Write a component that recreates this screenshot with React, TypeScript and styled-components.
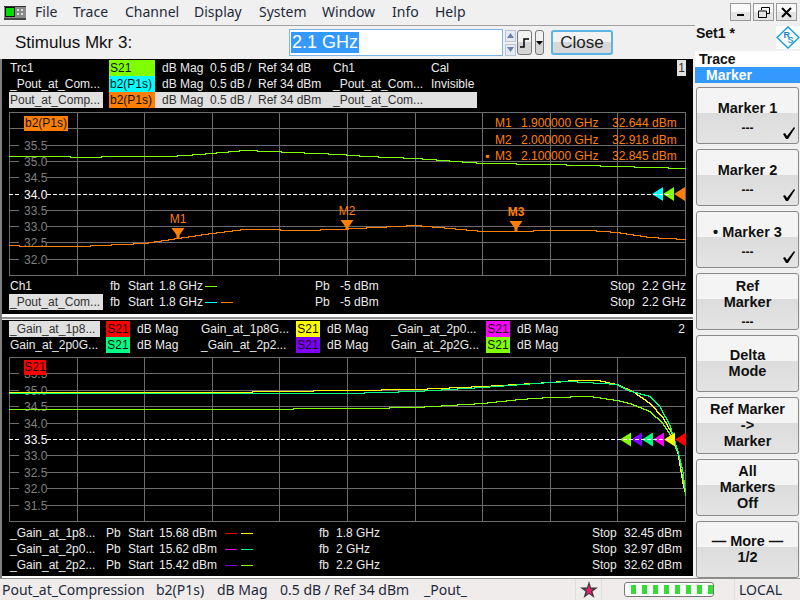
import React from 'react';
import styled, { createGlobalStyle } from 'styled-components';

const GlobalStyle = createGlobalStyle`
  html, body {
    margin: 0;
    padding: 0;
    background: #f0f0f0;
  }
`;

type Pt = [number, number];

const ORANGE = '#ff8000';
const LIME = '#80ff00';
const SPRING = '#00ff80';
const YELLOW = '#ffff00';

const stepPath = (pts: Pt[]) => {
  let d = '';
  let seg = 0;
  for (let x = pts[0][0]; x <= pts[pts.length - 1][0]; x++) {
    while (seg < pts.length - 2 && x > pts[seg + 1][0]) seg++;
    const [x0, y0] = pts[seg];
    const [x1, y1] = pts[seg + 1];
    const y = Math.round(y0 + ((y1 - y0) * (x - x0)) / (x1 - x0)) + 0.5;
    d += d ? `L${x} ${y}` : `M${x} ${y}`;
  }
  return d;
};

const upperGreen: Pt[] = [[9, 156], [70, 156], [72, 157], [100, 157], [102, 156], [170, 156], [200, 154], [245, 150], [270, 151], [340, 154], [366, 156], [416, 158], [483, 163], [550, 164], [617, 166], [686, 168]];
const upperOrange: Pt[] = [[9, 245], [30, 246], [80, 246], [100, 245], [145, 243], [178, 238], [212, 233], [245, 229], [262, 229], [300, 230], [340, 229], [356, 228], [416, 225], [450, 228], [483, 231], [516, 231], [550, 230], [590, 230], [617, 232], [650, 237], [686, 239]];
const lowerYellow: Pt[] = [[9, 392], [226, 392], [279, 391], [347, 390], [416, 389], [483, 386], [550, 382], [575, 380], [598, 380], [617, 384], [633, 391], [650, 403], [663, 417], [672, 433], [678, 453], [683, 483], [686, 495]];
const lowerSpring: Pt[] = [[9, 393], [347, 393], [416, 391], [483, 387], [550, 382], [570, 381], [617, 384], [628, 390], [650, 396], [660, 406], [670, 425], [678, 451], [683, 471], [686, 495]];
const lowerLime: Pt[] = [[9, 409], [287, 409], [300, 408], [363, 408], [416, 407], [483, 403], [520, 399], [550, 397], [590, 396], [617, 400], [630, 403], [650, 411], [663, 423], [672, 437], [678, 453], [686, 495]];

const vLines = [9, 77, 144, 212, 279, 347, 415, 482, 550, 617, 685];

const Root = styled.div`
  width: 800px;
  height: 600px;
  overflow: hidden;
  display: flex;
  flex-direction: column;
  background: #f0f0f0;
  font-family: 'Liberation Sans', Arial, sans-serif;
`;

const Body = styled.div`
  display: flex;
  height: 578px;
`;

const Main = styled.div`
  width: 695px;
  display: flex;
  flex-direction: column;
`;

const MenuBar = styled.div`
  height: 25px;
  box-sizing: content-box;
  display: flex;
  align-items: center;
  padding-left: 4px;
  border-bottom: 1px solid #a0a0a0;
  font-family: 'Noto Sans', sans-serif;
  font-size: 14px;
  line-height: 21px;
  color: #1e2a3a;
  svg {
    margin-right: 9px;
    margin-top: 0;
  }
`;

const MenuItem = styled.span<{ $w: number }>`
  width: ${(p) => p.$w}px;
  margin-top: -3px;
`;

const StimulusBar = styled.div`
  height: 33px;
  display: flex;
  align-items: center;
  padding-left: 15px;
`;

const StimulusLabel = styled.span`
  width: 274px;
  font-size: 17px;
  color: #111;
`;

const FreqInput = styled.div`
  width: 211px;
  height: 25px;
  border: 1px solid #7eb4ea;
  background: #fff;
  display: flex;
  align-items: center;
  padding-left: 1px;
`;

const Selected = styled.span`
  background: #3399ff;
  color: #fff;
  font-size: 18px;
  line-height: 21px;
  padding: 0 1px;
`;

const Spin = styled.div`
  margin-left: 2px;
  width: 11px;
  height: 26px;
  display: flex;
  flex-direction: column;
  justify-content: space-between;
`;

const SpinPart = styled.div`
  height: 12px;
  border: 1px solid #b8c4d4;
  box-sizing: border-box;
  background: #e6eaf2;
  display: flex;
  align-items: center;
  justify-content: center;
`;

const ToolBtn = styled.div<{ $w: number; $ml: number }>`
  width: ${(p) => p.$w}px;
  margin-left: ${(p) => p.$ml}px;
  height: 25px;
  box-sizing: border-box;
  border: 1px solid #777;
  border-radius: 3px;
  background: linear-gradient(#f2f2f2 50%, #d4d4d4 50%);
  display: flex;
  justify-content: center;
  align-items: center;
`;

const CloseBtn = styled.div`
  margin-left: 7px;
  width: 62px;
  height: 25px;
  box-sizing: border-box;
  border: 2px solid #5cb4e0;
  border-radius: 3px;
  background: linear-gradient(#f2f2f2 50%, #d8d8d8 50%);
  font-size: 17px;
  color: #222;
  display: flex;
  align-items: center;
  justify-content: center;
`;

const Diagrams = styled.div`
  flex: 1;
  margin-right: 2px;
  display: flex;
  flex-direction: column;
  background: #fff;
  border-left: 2px solid #808080;
`;

const Diagram = styled.div<{ $h: number }>`
  position: relative;
  height: ${(p) => p.$h}px;
  background: #000;
  color: #ececec;
  font-size: 12px;
`;

const Gap = styled.div`
  height: 6px;
  background: linear-gradient(#fff 3px, #909090 3px, #909090 5px, #f0f0f0 5px);
`;

const Rows = styled.div<{ $top: number; $bottom: number }>`
  padding: ${(p) => p.$top}px 0 ${(p) => p.$bottom}px 7px;
`;

const Row = styled.div`
  display: flex;
  height: 16px;
  line-height: 16px;
  white-space: nowrap;
`;

const Cell = styled.span<{ $w: number; $ml?: number; $on?: boolean }>`
  width: ${(p) => p.$w}px;
  margin-left: ${(p) => p.$ml ?? 0}px;
  padding-left: 1px;
  box-sizing: border-box;
  overflow: hidden;
  flex: none;
  background: ${(p) => (p.$on ? '#e0e0e0' : 'transparent')};
  color: ${(p) => (p.$on ? '#303030' : 'inherit')};
`;

const Chip = styled.span<{ $bg: string; $w: number; $ml: number; $left?: boolean }>`
  width: ${(p) => p.$w}px;
  margin-left: ${(p) => p.$ml}px;
  flex: none;
  box-sizing: border-box;
  padding-left: ${(p) => (p.$left ? 1 : 0)}px;
  text-align: ${(p) => (p.$left ? 'left' : 'center')};
  background: ${(p) => p.$bg};
  color: #111;
`;

const GrayRun = styled.div<{ $on?: boolean }>`
  display: flex;
  padding-left: 6px;
  width: 322px;
  box-sizing: border-box;
  background: ${(p) => (p.$on ? '#e0e0e0' : 'transparent')};
  color: ${(p) => (p.$on ? '#303030' : 'inherit')};
`;

const Swatches = styled.span<{ $w: number }>`
  width: ${(p) => p.$w}px;
  flex: none;
  display: flex;
  align-items: center;
  gap: 4px;
`;

const Swatch = styled.i<{ $c: string }>`
  display: block;
  width: 12px;
  height: 1px;
  background: ${(p) => p.$c};
`;

const RightGroup = styled.div<{ $mr: number }>`
  margin-left: auto;
  margin-right: ${(p) => p.$mr}px;
  display: flex;
`;

const ChartWrap = styled.div<{ $h: number }>`
  position: relative;
  height: ${(p) => p.$h}px;
  svg {
    display: block;
  }
`;

const ChartBadge = styled.span<{ $left: number; $top: number; $w: number; $bg: string }>`
  position: absolute;
  left: ${(p) => p.$left}px;
  top: ${(p) => p.$top}px;
  width: ${(p) => p.$w}px;
  height: 15px;
  line-height: 15px;
  text-align: center;
  background: ${(p) => p.$bg};
  color: #111;
`;

const DiagramNo = styled.span<{ $box?: boolean }>`
  position: absolute;
  right: 7px;
  top: 1px;
  width: 9px;
  height: 16px;
  line-height: 16px;
  text-align: center;
  background: ${(p) => (p.$box ? '#e0e0e0' : 'transparent')};
  color: ${(p) => (p.$box ? '#303030' : 'inherit')};
`;

const MarkerList = styled.div`
  position: absolute;
  left: 483px;
  top: 3px;
  color: ${ORANGE};
`;

const MarkerRow = styled.div`
  display: flex;
  height: 16.5px;
  line-height: 16.5px;
  white-space: nowrap;
`;

const MarkerCol = styled.span<{ $w: number }>`
  width: ${(p) => p.$w}px;
`;

const Side = styled.div`
  width: 105px;
  display: flex;
  flex-direction: column;
`;

const WinButtons = styled.div`
  height: 26px;
  display: flex;
  padding: 3px 0 0 35px;
  box-sizing: border-box;
  gap: 2px;
`;

const WinBtn = styled.div`
  width: 21px;
  height: 18px;
  box-sizing: border-box;
  border: 1px solid #999;
  background: linear-gradient(#fafafa 50%, #e4e4e4 50%);
  display: flex;
  align-items: center;
  justify-content: center;
`;

const SetRow = styled.div`
  height: 25px;
  display: flex;
  justify-content: space-between;
  align-items: flex-start;
  padding-left: 1px;
  font-size: 14px;
  font-weight: bold;
  line-height: 14px;
  color: #111;
`;

const Tab = styled.div<{ $active?: boolean }>`
  height: 16px;
  line-height: 16px;
  font-size: 14px;
  font-weight: bold;
  padding-left: ${(p) => (p.$active ? 11 : 4)}px;
  background: ${(p) => (p.$active ? '#3399ff' : '#fff')};
  color: ${(p) => (p.$active ? '#fff' : '#111')};
`;

const Keys = styled.div`
  padding: 4px 1px 0 1px;
  display: flex;
  flex-direction: column;
  gap: 5px;
`;

const SoftKey = styled.div`
  position: relative;
  height: 57px;
  box-sizing: border-box;
  padding-bottom: 2px;
  border: 1px solid #8a8a8a;
  border-radius: 3px;
  background: linear-gradient(#f4f4f4 46%, #dcdcdc 46%, #e4e4e4);
  display: flex;
  flex-direction: column;
  align-items: center;
  justify-content: center;
  font-size: 14.5px;
  font-weight: bold;
  line-height: 16px;
  color: #111;
  text-align: center;
`;

const KeyDash = styled.span`
  margin-top: 10px;
  font-size: 12px;
  line-height: 4px;
`;

const Check = styled.svg`
  position: absolute;
  right: 2px;
  bottom: 3px;
`;

const StatusBar = styled.div`
  flex: 1;
  display: flex;
  align-items: center;
  border-top: 1px solid #909090;
  background: #f0ecec;
  font-family: 'Noto Sans', sans-serif;
  font-size: 14px;
  color: #1e2a3a;
  white-space: nowrap;
`;

const StatusText = styled.span<{ $w: number; $ml?: number }>`
  width: ${(p) => p.$w}px;
  margin-left: ${(p) => p.$ml ?? 0}px;
  flex: none;
`;

const StarBox = styled.div`
  width: 27px;
  height: 100%;
  box-sizing: border-box;
  border-left: 1px solid #ddd;
  border-right: 1px solid #ddd;
  display: flex;
  align-items: center;
  justify-content: center;
`;

const Meter = styled.div`
  margin-left: 22px;
  width: 90px;
  height: 15px;
  box-sizing: border-box;
  border: 1px solid #777;
  border-radius: 3px;
  background: #fff;
  display: flex;
  align-items: center;
  gap: 6px;
  padding-left: 6px;
`;

const MeterCell = styled.i`
  display: block;
  width: 6px;
  height: 9px;
  background: #33dd33;
`;

const LocalBox = styled.div`
  margin-left: 20px;
  height: 100%;
  flex: 1;
  padding-left: 4px;
  border-left: 1px solid #ddd;
  display: flex;
  align-items: center;
`;

const AppIcon = () => (
  <svg width="22" height="14" viewBox="0 0 22 14" style={{ flex: 'none' }}>
    <rect width="22" height="14" fill="#8a8a8a" />
    <rect x="0" y="0" width="22" height="1" fill="#333" />
    <rect x="1" y="1" width="10" height="10" fill="#111" />
    <rect x="2" y="2" width="8" height="8" fill="#00e000" />
    <rect x="13" y="3" width="2" height="2" fill="#ddd" />
    <rect x="17" y="3" width="2" height="2" fill="#ddd" />
    <rect x="13" y="7" width="2" height="2" fill="#ddd" />
    <rect x="17" y="7" width="2" height="2" fill="#ddd" />
    <rect x="0" y="12" width="22" height="2" fill="#444" />
  </svg>
);

const CheckMark = () => (
  <Check width="14" height="13" viewBox="0 0 14 13">
    <path d="M1 7 L3 6 L5 9 L12 0 L13 1 L6 12 L4 12 Z" fill="#000" />
  </Check>
);

const Logo = () => (
  <svg width="24" height="23" viewBox="0 0 24 23">
    <rect width="24" height="23" fill="#fff" />
    <path d="M12 1 L23 11.5 L12 22 L1 11.5 Z" fill="#fff" stroke="#1e9be0" strokeWidth="1.5" />
    <text x="7.5" y="12" fontSize="9" fontWeight="bold" fill="#1e7fc8" fontFamily="'Liberation Sans', sans-serif">R</text>
    <text x="11.5" y="17" fontSize="9" fontWeight="bold" fill="#1e9be0" fontFamily="'Liberation Sans', sans-serif">S</text>
  </svg>
);

const Triangle = ({ x, y, c }: { x: number; y: number; c: string }) => (
  <path d={`M${x} ${y} L${x + 11} ${y - 7} V${y + 7} Z`} fill={c} />
);

const MarkerFlag = ({ x, tip, label, labelY, bold }: { x: number; tip: number; label: string; labelY: number; bold?: boolean }) => (
  <g>
    <text x={x} y={labelY + 4} fontSize="12" fontWeight={bold ? 'bold' : 'normal'} textAnchor="middle" fill={ORANGE} fontFamily="'Liberation Sans', sans-serif">
      {label}
    </text>
    <path d={`M${x - 6.5} ${tip - 10} h13 l-5 7 v3 h-3 v-3 Z`} fill={ORANGE} />
  </g>
);

const Chart = ({ top, h, ticks, refY, dashEnd, children }: {
  top: number;
  h: number;
  ticks: { y: number; t: string; ref?: boolean }[];
  refY: number;
  dashEnd: number;
  children: React.ReactNode;
}) => {
  const rows = Array.from({ length: 11 }, (_, i) => top + Math.round((i * (h - 1)) / 10));
  return (
    <svg width="691" height={h} viewBox={`2 ${top} 691 ${h}`}>
      <g stroke="#6c6c6c" shapeRendering="crispEdges">
        {rows.map((y) => (y === refY ? null : <line key={y} x1={9} x2={686} y1={y + 0.5} y2={y + 0.5} />))}
        {vLines.map((x) => <line key={x} x1={x + 0.5} x2={x + 0.5} y1={top} y2={top + h - 1} />)}
      </g>
      {ticks.map((k) => (
        <g key={k.t}>
          <rect x={19} y={k.y - 6} width={28} height={13} fill="#000" />
          <text x={24} y={k.y + 5} fontSize="12" fill={k.ref ? '#fff' : '#808080'} fontFamily="'Liberation Sans', sans-serif">{k.t}</text>
        </g>
      ))}
      {children}
      <line x1={47} x2={dashEnd} y1={refY + 0.5} y2={refY + 0.5} stroke="#fff" strokeDasharray="4 2" shapeRendering="crispEdges" />
      <line x1={9} x2={19} y1={refY + 0.5} y2={refY + 0.5} stroke="#fff" strokeDasharray="4 2" shapeRendering="crispEdges" />
    </svg>
  );
};

const upperTicks = [
  { y: 145, t: '35.5' }, { y: 161, t: '35.0' }, { y: 177, t: '34.5' }, { y: 194, t: '34.0', ref: true },
  { y: 210, t: '33.5' }, { y: 226, t: '33.0' }, { y: 242, t: '32.5' }, { y: 259, t: '32.0' },
];

const lowerTicks = [
  { y: 373, t: '35.5' }, { y: 390, t: '35.0' }, { y: 406, t: '34.5' }, { y: 423, t: '34.0' },
  { y: 439, t: '33.5', ref: true }, { y: 455, t: '33.0' }, { y: 472, t: '32.5' }, { y: 488, t: '32.0' }, { y: 505, t: '31.5' },
];

const upperRows = [
  { name: 'Trc1', chip: 'S21', bg: LIME, mag: 'dB Mag', scale: '0.5 dB /', ref: 'Ref 34 dB', ch: 'Ch1', cal: 'Cal' },
  { name: '_Pout_at_Com...', chip: 'b2(P1s)', bg: '#00ffff', mag: 'dB Mag', scale: '0.5 dB /', ref: 'Ref 34 dBm', ch: '_Pout_at_Com...', cal: 'Invisible' },
  { name: 'Pout_at_Comp...', chip: 'b2(P1s)', bg: ORANGE, mag: 'dB Mag', scale: '0.5 dB /', ref: 'Ref 34 dBm', ch: '_Pout_at_Com...', cal: '', on: true },
];

const lowerRows = [
  [
    { name: '_Gain_at_1p8...', bg: '#ff0000', on: true },
    { name: 'Gain_at_1p8G...', bg: YELLOW },
    { name: '_Gain_at_2p0...', bg: '#ff00ff' },
  ],
  [
    { name: 'Gain_at_2p0G...', bg: SPRING },
    { name: '_Gain_at_2p2...', bg: '#8000ff' },
    { name: 'Gain_at_2p2G...', bg: LIME },
  ],
];

const lowerFooter = [
  { name: '_Gain_at_1p8...', start: '15.68 dBm', a: '#ff0000', b: YELLOW, f: '1.8 GHz', stop: '32.45 dBm' },
  { name: '_Gain_at_2p0...', start: '15.62 dBm', a: '#ff00ff', b: SPRING, f: '2 GHz', stop: '32.97 dBm' },
  { name: '_Gain_at_2p2...', start: '15.42 dBm', a: '#8000ff', b: LIME, f: '2.2 GHz', stop: '32.62 dBm' },
];

const keys: { lines: string[]; dash?: boolean; check?: boolean }[] = [
  { lines: ['Marker 1'], dash: true, check: true },
  { lines: ['Marker 2'], dash: true, check: true },
  { lines: ['• Marker 3'], dash: true, check: true },
  { lines: ['Ref', 'Marker'], dash: true },
  { lines: ['Delta', 'Mode'] },
  { lines: ['Ref Marker', '->', 'Marker'] },
  { lines: ['All', 'Markers', 'Off'] },
  { lines: ['— More —', '1/2'] },
];

const markers = [
  { dot: '', m: 'M1', f: '1.900000 GHz', v: '32.644 dBm' },
  { dot: '', m: 'M2', f: '2.000000 GHz', v: '32.918 dBm' },
  { dot: '▪', m: 'M3', f: '2.100000 GHz', v: '32.845 dBm' },
];

const menus: [string, number][] = [['File', 38], ['Trace', 52], ['Channel', 69], ['Display', 65], ['System', 63], ['Window', 70], ['Info', 43], ['Help', 40]];

const App = () => (
  <Root>
    <GlobalStyle />
    <Body>
      <Main>
        <MenuBar>
          <AppIcon />
          {menus.map(([m, w]) => <MenuItem key={m} $w={w}>{m}</MenuItem>)}
        </MenuBar>
        <StimulusBar>
          <StimulusLabel>Stimulus Mkr 3:</StimulusLabel>
          <FreqInput><Selected>2.1 GHz</Selected></FreqInput>
          <Spin>
            <SpinPart><svg width="7" height="5"><path d="M3.5 0 L7 5 H0 Z" fill="#6a7fb0" /></svg></SpinPart>
            <SpinPart><svg width="7" height="5"><path d="M0 0 H7 L3.5 5 Z" fill="#6a7fb0" /></svg></SpinPart>
          </Spin>
          <ToolBtn $w={15} $ml={1}>
            <svg width="11" height="11" viewBox="0 0 11 11"><path d="M1 10 H5 V2 H10" fill="none" stroke="#000" strokeWidth="1.5" /></svg>
          </ToolBtn>
          <ToolBtn $w={9} $ml={3}>
            <svg width="7" height="4"><path d="M0 0 H7 L3.5 4 Z" fill="#000" /></svg>
          </ToolBtn>
          <CloseBtn>Close</CloseBtn>
        </StimulusBar>
        <Diagrams>
          <Diagram $h={255}>
            <DiagramNo $box>1</DiagramNo>
            <Rows $top={1} $bottom={4}>
              {upperRows.map((r) => (
                <Row key={r.name}>
                  <Cell $w={94} $on={r.on}>{r.name}</Cell>
                  <Chip $bg={r.bg} $w={46} $ml={6} $left>{r.chip}</Chip>
                  <GrayRun $on={r.on}>
                    <Cell $w={48}>{r.mag}</Cell>
                    <Cell $w={48}>{r.scale}</Cell>
                    <Cell $w={75}>{r.ref}</Cell>
                    <Cell $w={98}>{r.ch}</Cell>
                    <Cell $w={47}>{r.cal}</Cell>
                  </GrayRun>
                </Row>
              ))}
            </Rows>
            <ChartWrap $h={164}>
              <Chart top={112} h={164} ticks={upperTicks} refY={194} dashEnd={672}>
                <g fill="none" shapeRendering="crispEdges">
                  <path d={stepPath(upperGreen)} stroke={LIME} />
                  <path d={stepPath(upperOrange)} stroke={ORANGE} />
                </g>
                <MarkerFlag x={178} tip={238} label="M1" labelY={219} />
                <MarkerFlag x={347} tip={230} label="M2" labelY={211} />
                <MarkerFlag x={516} tip={231} label="M3" labelY={212} bold />
                <Triangle x={652} y={194} c="#00ffff" />
                <Triangle x={663} y={194} c={LIME} />
                <Triangle x={674} y={194} c={ORANGE} />
              </Chart>
              <ChartBadge $left={22} $top={4} $w={44} $bg={ORANGE}>b2(P1s)</ChartBadge>
              <MarkerList>
                {markers.map((k) => (
                  <MarkerRow key={k.m}>
                    <MarkerCol $w={10}>{k.dot}</MarkerCol>
                    <MarkerCol $w={26}>{k.m}</MarkerCol>
                    <MarkerCol $w={91}>{k.f}</MarkerCol>
                    <MarkerCol $w={68}>{k.v}</MarkerCol>
                  </MarkerRow>
                ))}
              </MarkerList>
            </ChartWrap>
            <Rows $top={2} $bottom={0}>
              <Row>
                <Cell $w={100}>Ch1</Cell>
                <Cell $w={18}>fb</Cell>
                <Cell $w={31}>Start</Cell>
                <Cell $w={47}>1.8 GHz</Cell>
                <Swatches $w={109}><Swatch $c={LIME} /></Swatches>
                <Cell $w={25}>Pb</Cell>
                <Cell $w={60}>-5 dBm</Cell>
                <RightGroup $mr={7}>
                  <Cell $w={33}>Stop</Cell>
                  <span>2.2 GHz</span>
                </RightGroup>
              </Row>
              <Row>
                <Cell $w={94} $on>_Pout_at_Com...</Cell>
                <Cell $w={18} $ml={6}>fb</Cell>
                <Cell $w={31}>Start</Cell>
                <Cell $w={47}>1.8 GHz</Cell>
                <Swatches $w={109}><Swatch $c="#00ffff" /><Swatch $c={ORANGE} /></Swatches>
                <Cell $w={25}>Pb</Cell>
                <Cell $w={60}>-5 dBm</Cell>
                <RightGroup $mr={7}>
                  <Cell $w={33}>Stop</Cell>
                  <span>2.2 GHz</span>
                </RightGroup>
              </Row>
            </Rows>
          </Diagram>
          <Gap />
          <Diagram $h={256}>
            <DiagramNo>2</DiagramNo>
            <Rows $top={1} $bottom={4}>
              {lowerRows.map((row, i) => (
                <Row key={i}>
                  {row.map((t, j) => (
                    <React.Fragment key={t.name}>
                      <Cell $w={91} $on={t.on}>{t.name}</Cell>
                      <Chip $bg={t.bg} $w={24} $ml={j === 0 ? 6 : 5}>S21</Chip>
                      <Cell $w={64} $ml={6}>dB Mag</Cell>
                    </React.Fragment>
                  ))}
                </Row>
              ))}
            </Rows>
            <ChartWrap $h={165}>
              <Chart top={357} h={165} ticks={lowerTicks} refY={439} dashEnd={672}>
                <g fill="none" shapeRendering="crispEdges">
                  <path d={stepPath(lowerLime)} stroke={LIME} />
                  <path d={stepPath(lowerYellow)} stroke={YELLOW} />
                  <path d={stepPath(lowerSpring)} stroke={SPRING} />
                </g>
                <Triangle x={620} y={439.5} c={LIME} />
                <Triangle x={631} y={439.5} c="#8000ff" />
                <Triangle x={642} y={439.5} c={SPRING} />
                <Triangle x={653} y={439.5} c="#ff00ff" />
                <Triangle x={664} y={439.5} c={YELLOW} />
                <Triangle x={675} y={439.5} c="#ff0000" />
              </Chart>
              <ChartBadge $left={22} $top={3} $w={22} $bg="#ff0000">S21</ChartBadge>
            </ChartWrap>
            <Rows $top={3} $bottom={0}>
              {lowerFooter.map((r) => (
                <Row key={r.name}>
                  <Cell $w={96}>{r.name}</Cell>
                  <Cell $w={22}>Pb</Cell>
                  <Cell $w={31}>Start</Cell>
                  <Cell $w={67}>{r.start}</Cell>
                  <Swatches $w={93}><Swatch $c={r.a} /><Swatch $c={r.b} /></Swatches>
                  <Cell $w={17}>fb</Cell>
                  <Cell $w={60}>{r.f}</Cell>
                  <RightGroup $mr={11}>
                    <Cell $w={33}>Stop</Cell>
                    <span>{r.stop}</span>
                  </RightGroup>
                </Row>
              ))}
            </Rows>
          </Diagram>
        </Diagrams>
      </Main>
      <Side>
        <WinButtons>
          <WinBtn><svg width="9" height="9"><rect x="1" y="6" width="7" height="2" fill="#000" /></svg></WinBtn>
          <WinBtn>
            <svg width="12" height="11" viewBox="0 0 12 11"><path d="M3.5 3 V0.5 H11.5 V6.5 H8.5 M0.5 4 H8.5 V10.5 H0.5 Z" fill="none" stroke="#000" /></svg>
          </WinBtn>
          <WinBtn>
            <svg width="11" height="11" viewBox="0 0 11 11"><path d="M1 1 L10 10 M10 1 L1 10" stroke="#000" strokeWidth="2" /></svg>
          </WinBtn>
        </WinButtons>
        <SetRow>
          <span>Set1 *</span>
          <Logo />
        </SetRow>
        <Tab>Trace</Tab>
        <Tab $active>Marker</Tab>
        <Keys>
          {keys.map((k) => (
            <SoftKey key={k.lines.join(' ')}>
              {k.lines.map((l) => <span key={l}>{l}</span>)}
              {k.dash && <KeyDash>---</KeyDash>}
              {k.check && <CheckMark />}
            </SoftKey>
          ))}
        </Keys>
      </Side>
    </Body>
    <StatusBar>
      <StatusText $w={154} $ml={2}>Pout_at_Compression</StatusText>
      <StatusText $w={61}>b2(P1s)</StatusText>
      <StatusText $w={63}>dB Mag</StatusText>
      <StatusText $w={144}>0.5 dB / Ref 34 dBm</StatusText>
      <StatusText $w={151}>_Pout_</StatusText>
      <StarBox>
        <svg width="18" height="18" viewBox="0 0 18 18">
          <path d="M9 0 L11 6.5 L18 6.5 L12.5 10.5 L14.5 17 L9 13 L3.5 17 L5.5 10.5 L0 6.5 L7 6.5 Z" fill="#3a3a3a" />
          <path d="M9 4 L10.5 8 L13 8 L11 10.5 L12 14 L9 12 L6 14 L7 10.5 L5 8 L7.5 8 Z" fill="#e0206a" />
        </svg>
      </StarBox>
      <Meter>{Array.from({ length: 8 }, (_, i) => <MeterCell key={i} />)}</Meter>
      <LocalBox>LOCAL</LocalBox>
    </StatusBar>
  </Root>
);

export default App;
